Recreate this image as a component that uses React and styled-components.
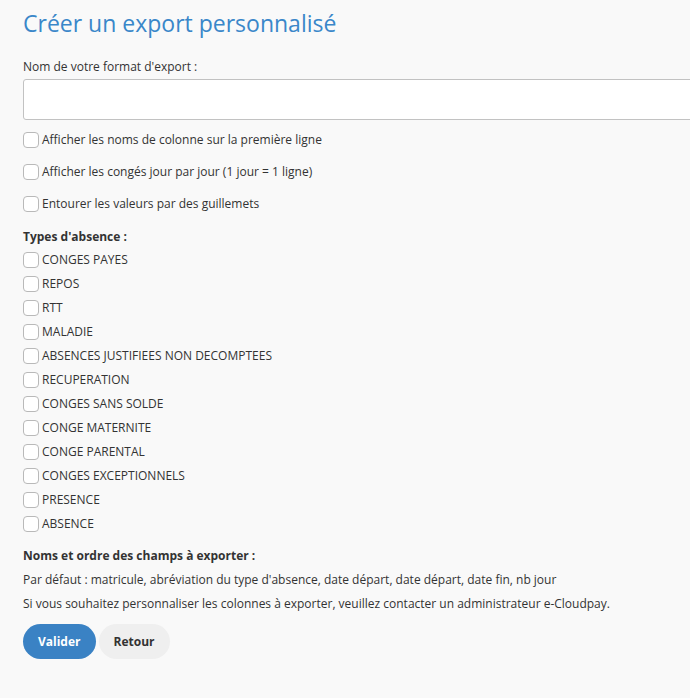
import React from "react";
import styled, { createGlobalStyle } from "styled-components";

const Global = createGlobalStyle`
  html, body { margin: 0; padding: 0; background: #f9f9f9; overflow: hidden; }
  body { font-family: "Open Sans", "Liberation Sans", sans-serif; color: #333; font-size: 12px; }
`;

const Page = styled.div`
  padding: 10px 0 40px 23px;
  display: flex;
  flex-direction: column;
`;

const Title = styled.h1`
  margin: 0 0 22px;
  font-size: 23px;
  line-height: 26px;
  font-weight: 400;
  color: #3a87c9;
`;

const Label = styled.div`
  font-size: 12px;
  line-height: 17px;
  font-weight: ${(p) => (p.$bold ? 700 : 400)};
  margin-top: ${(p) => p.$mt || 0}px;
`;

const TextInput = styled.input`
  box-sizing: border-box;
  margin-top: 4px;
  width: 720px;
  height: 41px;
  border: 1px solid #c2c2c2;
  border-radius: 3px;
  background: #fff;
  font: inherit;
  padding: 0 10px;
  outline: none;
`;

const Group = styled.div`
  display: flex;
  flex-direction: column;
  gap: ${(p) => p.$gap}px;
  margin-top: ${(p) => p.$mt}px;
`;

const Row = styled.label`
  display: flex;
  align-items: center;
  gap: 3px;
  height: 16px;
  font-size: 12px;
  line-height: 16px;
  white-space: nowrap;
`;

const Box = styled.span`
  box-sizing: border-box;
  width: 16px;
  height: 16px;
  border: 1px solid #b9b9b9;
  border-radius: 4px;
  background: #fff;
  flex: none;
`;

const Buttons = styled.div`
  display: flex;
  gap: 3px;
  margin-top: 12px;
`;

const Button = styled.button`
  height: 35px;
  padding: 0 ${(p) => p.$px}px;
  border: none;
  border-radius: 18px;
  font-family: "Open Sans", "Liberation Sans", sans-serif;
  font-size: 12px;
  font-weight: 700;
  background: ${(p) => (p.$primary ? "#3a82c4" : "#efefef")};
  color: ${(p) => (p.$primary ? "#fff" : "#333")};
`;

const options = [
  "Afficher les noms de colonne sur la première ligne",
  "Afficher les congés jour par jour (1 jour = 1 ligne)",
  "Entourer les valeurs par des guillemets",
];

const types = [
  "CONGES PAYES",
  "REPOS",
  "RTT",
  "MALADIE",
  "ABSENCES JUSTIFIEES NON DECOMPTEES",
  "RECUPERATION",
  "CONGES SANS SOLDE",
  "CONGE MATERNITE",
  "CONGE PARENTAL",
  "CONGES EXCEPTIONNELS",
  "PRESENCE",
  "ABSENCE",
];

export default function App() {
  return (
    <>
      <Global />
      <Page>
        <Title>Créer un export personnalisé</Title>
        <Label>Nom de votre format d'export :</Label>
        <TextInput type="text" />
        <Group $gap={16} $mt={12}>
          {options.map((o) => (
            <Row key={o}>
              <Box />
              {o}
            </Row>
          ))}
        </Group>
        <Label $bold $mt={16}>Types d'absence :</Label>
        <Group $gap={8} $mt={7}>
          {types.map((t) => (
            <Row key={t}>
              <Box />
              {t}
            </Row>
          ))}
        </Group>
        <Label $bold $mt={15}>Noms et ordre des champs à exporter :</Label>
        <Label $mt={7}>Par défaut : matricule, abréviation du type d'absence, date départ, date départ, date fin, nb jour</Label>
        <Label $mt={7}>Si vous souhaitez personnaliser les colonnes à exporter, veuillez contacter un administrateur e-Cloudpay.</Label>
        <Buttons>
          <Button $primary $px={15}>Valider</Button>
          <Button $px={15}>Retour</Button>
        </Buttons>
      </Page>
    </>
  );
}
